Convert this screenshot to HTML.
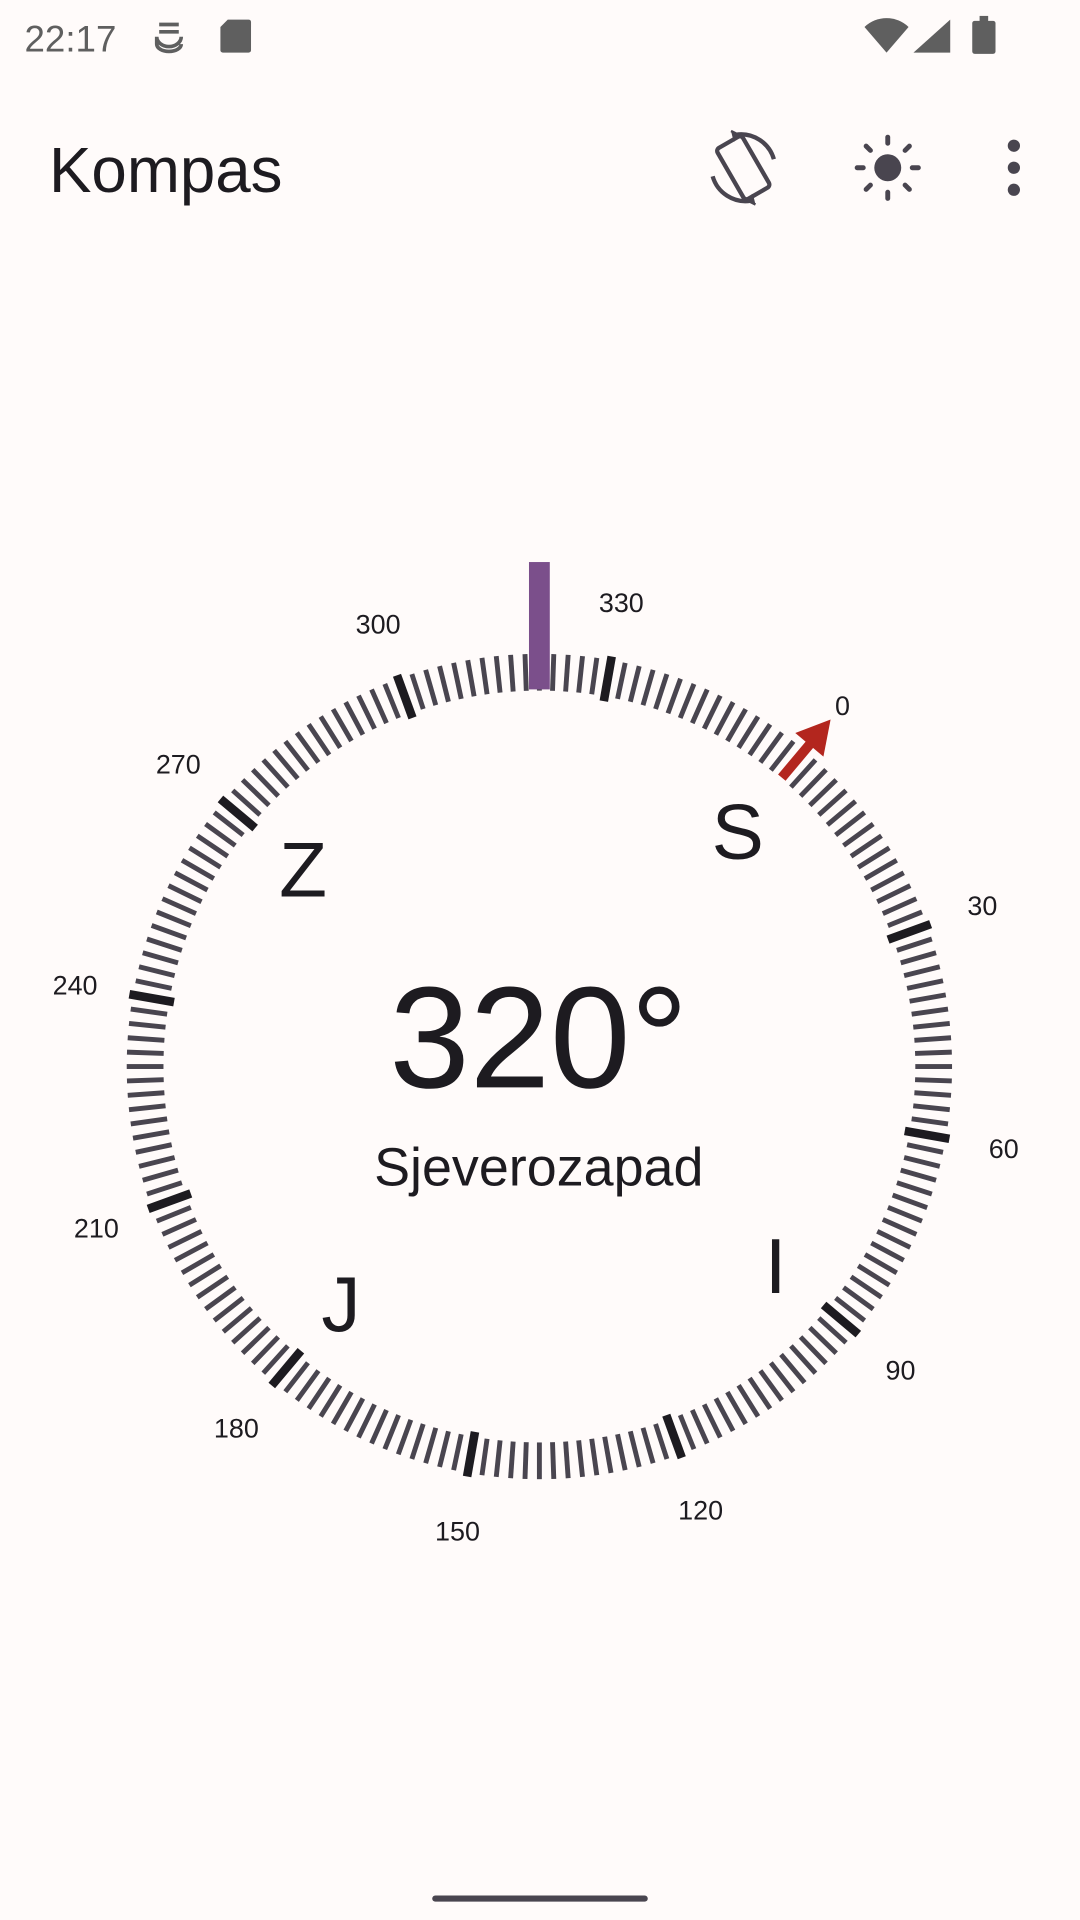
<!DOCTYPE html>
<html><head><meta charset="utf-8"><style>
html,body{margin:0;padding:0;background:#fffbfa;}
svg{display:block;font-family:"Liberation Sans",sans-serif;}
</style></head><body>
<svg id="s" width="1080" height="1920" viewBox="0 0 882 1568" xmlns="http://www.w3.org/2000/svg">
<rect width="882" height="1568" fill="#fffbfa"/>
<text x="20" y="42" font-size="30" fill="#5f5f5f">22:17</text>
<g fill="none" stroke="#5f5f5f" stroke-width="3">
<path d="M130 20h16M130 26h16M128 30a10 8 0 0 0 20 0M128 30v6a10 6 0 0 0 20 0"/>
</g>
<path d="M186 16h17a2 2 0 0 1 2 2v23a2 2 0 0 1-2 2h-21a2 2 0 0 1-2-2v-19z" fill="#5f5f5f"/>
<path d="M706 22a26 26 0 0 1 36 0l-18 21z" fill="#5f5f5f"/>
<path d="M776 16v27h-30z" fill="#5f5f5f"/>
<rect x="794" y="17" width="19" height="27" rx="2" fill="#5f5f5f"/><rect x="800" y="13" width="7" height="5" fill="#5f5f5f"/>
<text x="40" y="157" font-size="52" fill="#1d1b20">Kompas</text>
<g transform="translate(607,137)" fill="none" stroke="#49454f" stroke-width="3.5">
<rect x="-12" y="-24" width="24" height="48" rx="3" transform="rotate(-30)"/>
<path d="M-6 -27a28 28 0 0 1 31 20M6 27a28 28 0 0 1 -31 -20"/>
<path d="M-10 -30l6 3-4 5M10 30l-6-3 4-5" fill="#49454f" stroke-width="2"/>
</g>
<g transform="translate(725,137)" fill="#49454f">
<circle r="11"/>
<g id="ray"><rect x="-2" y="-27" width="4" height="9" rx="2"/></g>
<use href="#ray" transform="rotate(45)"/><use href="#ray" transform="rotate(90)"/><use href="#ray" transform="rotate(135)"/><use href="#ray" transform="rotate(180)"/><use href="#ray" transform="rotate(225)"/><use href="#ray" transform="rotate(270)"/><use href="#ray" transform="rotate(315)"/>
</g>
<g fill="#49454f"><circle cx="828" cy="119" r="5"/><circle cx="828" cy="137" r="5"/><circle cx="828" cy="155" r="5"/></g>
<g id="dial" transform="translate(440.5,871)"></g>
<rect x="432" y="459" width="17" height="104" fill="#7b4f8b"/>
<g transform="translate(440.5,871) rotate(40)" fill="#b3261e">
<rect x="-4" y="-346" width="8" height="38"/>
<polygon points="-15,-343 15,-343 0,-370"/>
</g>
<g fill="#1d1b20" text-anchor="middle">
<text x="440" y="888" font-size="118">320°</text>
<text x="440" y="968" font-size="44">Sjeverozapad</text>
</g>
<rect x="353" y="1548" width="176" height="5" rx="2.5" fill="#49454f"/>
</svg>
<script>
var g=document.getElementById('dial'),h='';
for(var d=0;d<360;d+=2){var a=d-320;
 if(d!=0){ if(d%30==0) h+='<rect x="-3.5" y="-340" width="7" height="37" fill="#1d1b20" transform="rotate('+a+')"/>';
 else h+='<rect x="-2" y="-337" width="4" height="30" fill="#49454f" transform="rotate('+a+')"/>';}
 if(d%30==0){var r=a*Math.PI/180,x=385*Math.sin(r),y=-385*Math.cos(r);
 h+='<text x="'+x.toFixed(1)+'" y="'+(y+8).toFixed(1)+'" font-size="22" text-anchor="middle" fill="#1d1b20">'+d+'</text>';}
}
var c=[['S',0],['I',90],['J',180],['Z',270]];
c.forEach(function(k){var r=(k[1]-320)*Math.PI/180,x=252*Math.sin(r),y=-252*Math.cos(r);
 h+='<text x="'+x.toFixed(1)+'" y="'+(y+23).toFixed(1)+'" font-size="64" text-anchor="middle" fill="#1d1b20">'+k[0]+'</text>';});
g.innerHTML=h;
</script>
</body></html>
